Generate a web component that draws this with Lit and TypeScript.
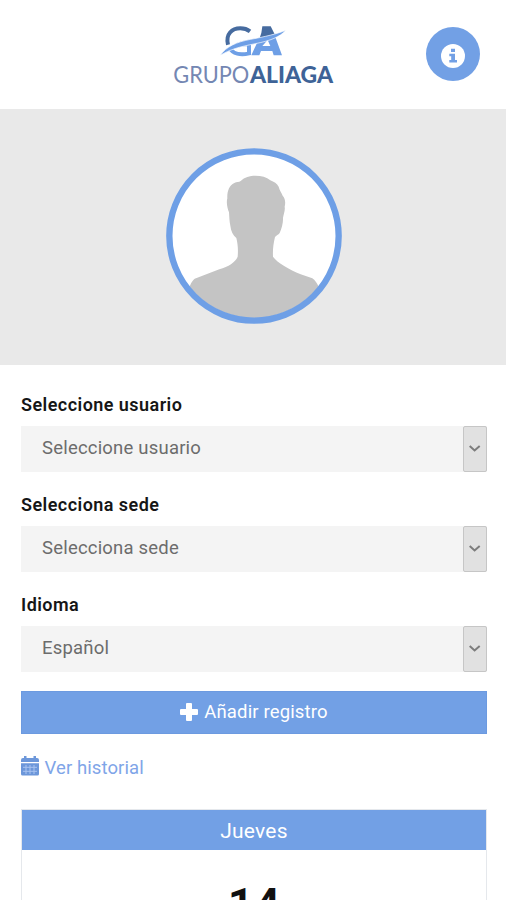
import { LitElement, html, css } from "lit";
import { customElement, property } from "lit/decorators.js";

@customElement("brand-logo")
class BrandLogo extends LitElement {
  static styles = css`
    :host { display: block; width: 190px; height: 90px; }
    svg { display: block; }
    text { font-family: Lato, "Open Sans", sans-serif; font-size: 23px; }
    .thin { fill: #7487b3; }
    .heavy { fill: #3e6397; font-weight: 900; }
  `;
  render() {
    return html`<svg width="190" height="90" viewBox="0 0 570 270" role="img" aria-label="Grupo Aliaga">
      <path d="M204 104C196 72 216 55 241 55C253 55 262 58 270 64" fill="none" stroke="#466b9f" stroke-width="12"/>
      <path d="M307 49H332L344 73L298 87L304 69Z" fill="#466b9f"/>
      <path d="M208 112C218 132 242 136 267 130V103H239" fill="none" stroke="#6e9fe6" stroke-width="12"/>
      <path d="M294 92L344 76L366 136H341L337 123H303L298 136H274ZM307 108H331L323 90Z" fill="#6e9fe6" fill-rule="evenodd"/>
      <path d="M181 136C199 109 230 96 272 88C316 80 349 72 378 61C359 81 332 92 286 101C239 110 208 119 181 136Z" fill="#6e9fe6" stroke="#fff" stroke-width="2"/>
      <g transform="scale(3)">
        <text class="thin" x="13.3" y="72.7" textLength="76" lengthAdjust="spacingAndGlyphs">GRUPO</text>
        <text class="heavy" x="90" y="72.7" textLength="83" lengthAdjust="spacingAndGlyphs">ALIAGA</text>
      </g>
    </svg>`;
  }
}

@customElement("select-field")
class SelectField extends LitElement {
  @property() label = "";
  @property() value = "";
  static styles = css`
    :host { display: block; height: 100px; }
    .label { height: 40px; line-height: 40px; padding-bottom: 1px; color: #161616; font-weight: 600; font-size: 18px; letter-spacing: 0.45px; }
    .box { display: flex; justify-content: space-between; height: 46px; background: #f4f4f4; }
    .value { padding-left: 21px; line-height: 45px; font-size: 18.5px; color: #6c6c6c; letter-spacing: 0.2px; }
    .arrow { box-sizing: border-box; width: 24px; height: 46px; border: 1.5px solid #c6c6c6; border-radius: 2px; background: #e1e1e1; display: flex; align-items: center; justify-content: center; }
  `;
  render() {
    return html`<div class="label">${this.label}</div>
      <div class="box">
        <span class="value">${this.value}</span>
        <span class="arrow"><svg width="14" height="10" viewBox="0 0 14 10"><path d="M1.7 2L6.6 6.5L11.7 2" fill="none" stroke="#7c7c7c" stroke-width="2"/></svg></span>
      </div>`;
  }
}

@customElement("app-root")
class AppRoot extends LitElement {
  static styles = css`
    :host { display: block; height: 900px; overflow: hidden; background: #fff; font-family: Roboto, "Liberation Sans", sans-serif; }
    .header { display: grid; grid-template-columns: 160px 190px 1fr; height: 109px; }
    .logo { padding-top: 10px; }
    .info { justify-self: end; margin: 27px 26px 0 0; width: 54px; height: 54px; border-radius: 50%; background: #72a0e5; display: flex; align-items: center; justify-content: center; }
    .info svg { margin-top: 3px; }
    .hero { height: 255.5px; background: #e9e9e9; display: flex; justify-content: center; }
    .avatar { width: 176px; height: 176px; margin-top: 39px; margin-left: 1px; }
    .form { padding: 20px 19px 0 21px; }
    .add { display: flex; align-items: center; justify-content: center; gap: 6px; height: 43px; line-height: 45px; margin-top: 6px; background: #72a0e5; box-shadow: inset 0 0 0 1px #6c9ae0; color: #fff; font-size: 18.5px; letter-spacing: 0.15px; }
    .add svg { margin-top: -1px; }
    .add span { padding-top: 1.5px; }
    .history { display: flex; align-items: center; gap: 6px; height: 24px; margin-top: 22px; color: #7fa5e8; font-size: 18.5px; letter-spacing: 0.1px; }
    .history svg { margin-top: -3px; }
    .history span { margin-left: -0.5px; }
    .day { margin-top: 29px; border: 1px solid #e5e8ec; height: 200px; text-align: center; }
    .weekday { height: 40px; line-height: 43px; background: #72a0e5; color: #fff; font-size: 21px; letter-spacing: 0.2px; }
    .date { margin-top: 27.5px; line-height: 56px; font-size: 46px; font-weight: 600; color: #111; }
  `;
  render() {
    return html`
      <header class="header">
        <span></span>
        <brand-logo class="logo"></brand-logo>
        <span class="info"><svg width="24" height="24" viewBox="0 0 24 24"><circle cx="12" cy="12" r="12" fill="#fff"/><path d="M10 4.7H14V8H10ZM8.3 9.7H14V16H16V18.6H8.3V16H10.2V12.2H8.3Z" fill="#72a0e5"/></svg></span>
      </header>
      <section class="hero">
        <svg class="avatar" viewBox="0 0 528 528">
          <defs><clipPath id="disc"><circle cx="264" cy="264" r="246"/></clipPath></defs>
          <circle cx="264" cy="264" r="254" fill="#fff"/>
          <path clip-path="url(#disc)" fill="#c4c4c4" d="M215 326C217 304 215 286 211 270C201 262 195 250 193 233C190 220 190 206 189 193C185 182 180 166 184 151C183 132 189 111 205 105C212 101 219 103 224 99C236 87 251 83 268 83C286 83 302 87 313 97C324 101 333 107 338 116C341 128 347 134 350 143C358 151 359 165 356 176C358 187 353 198 351 209C352 223 347 242 341 255C337 260 331 263 327 267C322 287 320 306 321 326C334 344 370 365 404 379L439 391C455 402 462 425 466 440V528H66V440C69 415 75 402 86 392L160 364C188 355 207 344 215 326Z"/>
          <circle cx="264" cy="264" r="254" fill="none" stroke="#6e9fe6" stroke-width="19"/>
        </svg>
      </section>
      <main class="form">
        <select-field label="Seleccione usuario" value="Seleccione usuario"></select-field>
        <select-field label="Selecciona sede" value="Selecciona sede"></select-field>
        <select-field label="Idioma" value="Español"></select-field>
        <div class="add"><svg width="18" height="18" viewBox="0 0 18 18"><path d="M7 0H11Q12 0 12 1V6H17Q18 6 18 7V11Q18 12 17 12H12V17Q12 18 11 18H7Q6 18 6 17V12H1Q0 12 0 11V7Q0 6 1 6H6V1Q6 0 7 0Z" fill="#fff"/></svg><span>Añadir registro</span></div>
        <div class="history"><svg width="18" height="20" viewBox="0 0 18 20">
          <path d="M0 6V4Q0 2 2 2H3V0H5.5V2H12.5V0H15V2H16Q18 2 18 4V6ZM0 7.3H18V18Q18 19.5 16.5 19.5H1.5Q0 19.5 0 18Z" fill="#6c97da"/>
          <path d="M2 11.3H16M2 15.3H16M5 9V18M9 9V18M13 9V18" stroke="#a9c4f0" stroke-width="1"/></svg><span>Ver historial</span></div>
        <div class="day"><div class="weekday">Jueves</div><div class="date">14</div></div>
      </main>`;
  }
}
